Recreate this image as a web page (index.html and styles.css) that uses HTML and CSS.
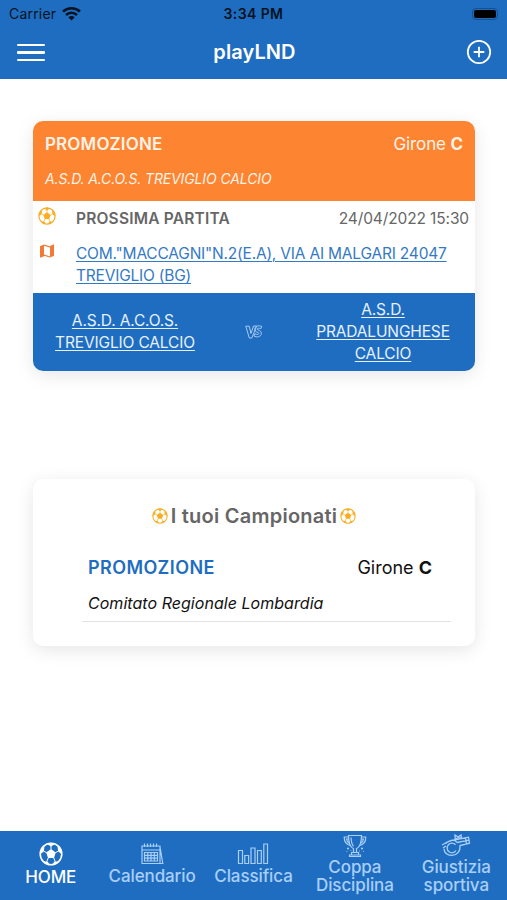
FILE: index.html
```html
<!DOCTYPE html>
<html lang="it">
<head>
    <meta charset="UTF-8">
    <meta name="viewport" content="width=device-width, initial-scale=1.0">
    <title>playLND</title>
    <link rel="stylesheet" href="styles.css">
</head>
<body>
    <svg class="sprite" aria-hidden="true">
        <symbol id="ball" viewBox="0 0 24 24">
            <circle cx="12" cy="12" r="10.8" fill="none" stroke="currentColor" stroke-width="1.6"/>
            <path fill="currentColor" d="M12 7l4.800 3.500-1.800 5.600H9L7.200 10.500zM7.500 1.800L12 4.500l4.500-2.700-4.500-1zM1.200 12.500l3.700-3.200.6-5.300-3.300 3.500zM22.800 12.500l-3.700-3.200-.6-5.300 3.300 3.500zM3.900 19.200l5 .5 1.400 3.100-3.300-.8zM20.100 19.200l-5 .5-1.400 3.100 3.300-.8z"/>
            <path fill="none" stroke="currentColor" stroke-width="1" d="M12 7.400V4M7.600 10.600l-3-1.400M16.400 10.600l3-1.400M9.300 15.800l-1.600 4M14.700 15.800l1.600 4"/>
        </symbol>
    </svg>

    <header class="header">
        <div class="status-bar">
            <div class="carrier">
                <span>Carrier</span>
                <svg width="19" height="14" viewBox="0 0 19 14" fill="none" stroke="#061321" stroke-width="2.500">
                    <path d="M1 4.700C5.700.2 13.300.2 18 4.700M4 8c3.100-2.900 7.900-2.900 11 0"/>
                    <path d="M6.300 10.200c1.800-1.600 4.600-1.600 6.400 0L9.500 13.600z" fill="#061321" stroke="none"/>
                </svg>
            </div>
            <div class="time">3:34 PM</div>
            <div class="battery"></div>
        </div>
        <div class="title-bar">
            <button class="menu-btn" aria-label="Menu"><i></i><i></i><i></i></button>
            <h1>playLND</h1>
            <button class="add-btn" aria-label="Aggiungi">
                <svg width="26" height="26" viewBox="0 0 26 26" fill="none" stroke="#fff" stroke-width="1.800">
                    <circle cx="13" cy="13" r="11.200"/>
                    <path d="M13 7.700v10.600M7.700 13h10.600"/>
                </svg>
            </button>
        </div>
    </header>

    <main class="content">
        <section class="card match">
            <div class="match-head">
                <div class="row">
                    <strong class="league">PROMOZIONE</strong>
                    <span class="group">Girone <b>C</b></span>
                </div>
                <em class="team">A.S.D. A.C.O.S. TREVIGLIO CALCIO</em>
            </div>
            <div class="match-info">
                <svg class="ball info-ball"><use href="#ball"/></svg>
                <div class="row">
                    <strong class="next">PROSSIMA PARTITA</strong>
                    <span class="date">24/04/2022 15:30</span>
                </div>
                <svg class="map" width="14" height="14" viewBox="0 0 14 14">
                    <path fill="#f37a35" d="M0 2.300L4 .6v11.600L0 13.800zM10 1.900L14 .2v11.600l-4 1.700z"/>
                    <path fill="none" stroke="#f37a35" stroke-width="1.300" d="M4 1.200l6 1.800M4 11.200l6 1.800"/>
                </svg>
                <a class="address" href="#">COM."MACCAGNI"N.2(E.A), VIA AI MALGARI 24047 TREVIGLIO (BG)</a>
            </div>
            <div class="versus">
                <a href="#">A.S.D. A.C.O.S.<br>TREVIGLIO CALCIO</a>
                <svg width="18" height="16" viewBox="0 0 18 16" fill="none" stroke="#a9cbf2" stroke-width="1" stroke-linejoin="round">
                    <path d="M.8 2.200h3.400L6 9.500 8.500 2h3.200L6.800 14H4.300z"/>
                    <path d="M16.800 2.500l-1 2.200c-2-.9-3.800-.5-3.600.6.2 1 4.300 1 4.200 4.200-.2 3.500-4.800 4.200-7.500 2.400l1-2.200c2 1.200 4 .9 4-.3 0-1.300-4.300-1-4.200-4 .1-3.500 4.200-4.400 7.100-2.900z"/>
                </svg>
                <a href="#">A.S.D.<br>PRADALUNGHESE<br>CALCIO</a>
            </div>
        </section>

        <section class="card leagues">
            <h2>
                <svg class="ball"><use href="#ball"/></svg>
                <span>I tuoi Campionati</span>
                <svg class="ball"><use href="#ball"/></svg>
            </h2>
            <div class="league-item">
                <div class="row">
                    <strong class="name">PROMOZIONE</strong>
                    <span class="group">Girone <b>C</b></span>
                </div>
                <em class="committee">Comitato Regionale Lombardia</em>
            </div>
        </section>
    </main>

    <nav class="tabs">
        <a class="tab active" href="#">
            <svg width="24" height="24"><use href="#ball"/></svg>
            <span>HOME</span>
        </a>
        <a class="tab" href="#">
            <svg width="24" height="24" viewBox="0 0 24 24" fill="none" stroke="currentColor" stroke-width="1.200">
                <path d="M2 4h18v17.500H2zM2 8h18M20 5l2.800 16.500H20M4.500 1.500V5M7.500 1.500V5M10.500 1.500V5M13.500 1.500V5M16.500 1.500V5"/>
                <path d="M4.500 10.500h13v8.500h-13zM4.500 13.300h13M4.500 16.200h13M7.800 10.500V19M11 10.500V19M14.300 10.500V19"/>
            </svg>
            <span>Calendario</span>
        </a>
        <a class="tab" href="#">
            <svg width="32" height="24" viewBox="0 0 32 24" fill="none" stroke="currentColor" stroke-width="1.200">
                <path d="M1.500 8.500h4v13h-4zM7.800 13.500h3.800v8H7.800zM14 6h4v15.500h-4zM20.500 8.500h3.800v13h-3.800zM26.800 2h3.700v19.500h-3.700z"/>
            </svg>
            <span>Classifica</span>
        </a>
        <a class="tab tall" href="#">
            <svg width="24" height="24" viewBox="0 0 24 24" fill="none" stroke="currentColor" stroke-width="1.200">
                <path d="M5.500 1.500h13c0 7-1.500 11.500-5 13.200v3.800h-3v-3.800C7 13 5.500 8.500 5.500 1.500zM8 3.500c.2 4.500 1 7 2.500 8.800"/>
                <path d="M5.500 3H1.200c0 5 2.300 7.800 6.300 8.500M5.800 5H3.500c.3 2.300 1.300 3.700 3 4.500M18.500 3h4.300c0 5-2.300 7.800-6.300 8.500M18.200 5h2.300c-.3 2.300-1.300 3.700-3 4.500M8.500 18.500h7V21h-7zM6.500 21h11v1.500h-11z"/>
                <path d="M5 13.500v2M4 14.500h2M19 13.500v2M18 14.500h2M7.500 16.500h.8M16 17h.8M3.500 17.500h.8M20 17.500h.8"/>
            </svg>
            <span>Coppa<br>Disciplina</span>
        </a>
        <a class="tab tall" href="#">
            <svg width="30" height="24" viewBox="0 0 30 24" fill="none" stroke="currentColor" stroke-width="1.300">
                <path d="M4.500 9.500C7 7 10 6.500 13 6l14.500-2.800 1 6-9.500 2.300c.5 5.500-2.500 9.500-8 9.800-5 .2-8-3-8-6.500M24.500 4l1 6M13 6l3.500 2.500 11-2.300"/>
                <path d="M14.500 10.800A4.800 4.800 0 1 0 15 16.500M1 11l4.500-2.500M2 14l3-2"/>
                <path d="M14 1l3 2 3-2 .5 3.500-3.300-.8-3 1.500z"/>
            </svg>
            <span>Giustizia<br>sportiva</span>
        </a>
    </nav>
</body>
</html>
```
FILE: styles.css
```css
* {
    box-sizing: border-box;
    margin: 0;
    padding: 0;
}

body {
    display: flex;
    flex-direction: column;
    height: 900px;
    background-color: #fff;
    color: #111;
    font-family: Inter, 'Liberation Sans', sans-serif;
    overflow: hidden;
}

svg {
    display: block;
    flex-shrink: 0;
}

button {
    background: none;
    border: none;
}

.sprite {
    display: none;
}

.row {
    display: flex;
    justify-content: space-between;
    align-items: baseline;
}

/* Header */
.header {
    height: 79px;
    background-color: #1f6dc1;
}

.status-bar {
    display: grid;
    grid-template-columns: 1fr auto 1fr;
    align-items: center;
    height: 27px;
    padding: 0 9px;
    color: #061321;
    font-size: 14px;
}

.carrier {
    display: flex;
    align-items: center;
    gap: 6px;
    letter-spacing: 0.2px;
}

.time {
    font-weight: 600;
    letter-spacing: 0.4px;
}

.battery {
    justify-self: end;
    width: 26px;
    height: 12px;
    border: 1px solid #16508f;
    border-radius: 4px;
    background: #000 content-box;
    padding: 1px;
}

.title-bar {
    display: grid;
    grid-template-columns: 1fr auto 1fr;
    align-items: center;
    height: 50px;
    padding: 0 15px 0 17px;
}

.title-bar h1 {
    color: #fff;
    font-size: 20px;
    font-weight: 600;
    letter-spacing: 0.1px;
}

.menu-btn {
    display: flex;
    flex-direction: column;
    gap: 5px;
    width: 28px;
    margin-top: 1px;
}

.menu-btn i {
    height: 2.3px;
    border-radius: 1px;
    background-color: #fff;
}

.add-btn {
    justify-self: end;
}

/* Cards */
.content {
    flex: 1;
    padding: 42px 32px 0 33px;
}

.card {
    border-radius: 10px;
    background-color: #fff;
    box-shadow: 0 4px 18px rgba(0, 0, 0, 0.1);
    overflow: hidden;
}

.match {
    height: 250px;
    margin-bottom: 108px;
}

.match-head {
    height: 80px;
    padding: 12px 12px 0;
    background-color: #fd8431;
    color: #fff3e8;
}

.match-head .row {
    line-height: 22px;
    font-size: 17px;
}

.match-head .league {
    font-weight: 600;
    letter-spacing: 0.15px;
}

.match-head .group {
    letter-spacing: -0.12px;
}

.team {
    display: block;
    margin-top: 14px;
    font-size: 14px;
    line-height: 20px;
    letter-spacing: -0.12px;
}

.ball {
    width: 16px;
    height: 16px;
    color: #f9ad20;
}

.match-info {
    display: grid;
    grid-template-columns: 37px 1fr;
    grid-template-rows: 34px 58px;
    height: 92px;
    padding: 0 6px;
}

.info-ball {
    width: 18px;
    height: 18px;
    margin-top: 6px;
    margin-left: -1px;
}

.match-info .row {
    padding-top: 7px;
    color: #666;
    font-size: 15.5px;
    line-height: 22px;
}

.next {
    font-weight: 600;
    letter-spacing: 0.2px;
}

.date {
    letter-spacing: -0.12px;
}

.map {
    margin: 9px 0 0 1px;
}

.address {
    padding-top: 8px;
    color: #3479c6;
    font-size: 15.5px;
    line-height: 22px;
    letter-spacing: -0.2px;
}

.versus {
    display: grid;
    grid-template-columns: 184px 1fr 184px;
    align-items: center;
    justify-items: center;
    height: 78px;
    background-color: #1f6dc1;
    font-size: 15.5px;
    line-height: 22px;
    letter-spacing: -0.15px;
    text-align: center;
}

.versus a {
    color: #e6f1fd;
}

.address,
.versus a {
    text-decoration-thickness: 1px;
    text-underline-offset: 2px;
}

.leagues {
    height: 167px;
    padding: 24px 24px 0 49px;
}

.leagues h2 {
    display: flex;
    align-items: center;
    justify-content: center;
    gap: 3px;
    margin-left: -25px;
    height: 26px;
    color: #666;
    font-size: 20px;
    font-weight: 600;
    letter-spacing: 0.25px;
}

.league-item {
    height: 93px;
    padding: 27px 19px 0 6px;
    border-bottom: 1px solid #e3e3e3;
}

.league-item .row {
    font-size: 18px;
    line-height: 24px;
}

.name {
    color: #1f6dc1;
    font-weight: 600;
    letter-spacing: 0.4px;
}

.committee {
    display: block;
    margin-top: 13px;
    font-size: 16px;
    line-height: 20px;
    letter-spacing: 0.04px;
}

/* Bottom tabs */
.tabs {
    display: grid;
    grid-template-columns: repeat(5, 1fr);
    height: 69px;
    background-color: #1f6dc1;
}

.tab {
    display: flex;
    flex-direction: column;
    align-items: center;
    padding-top: 11px;
    color: #a9cff8;
    font-size: 17px;
    font-weight: 500;
    line-height: 18px;
    letter-spacing: -0.1px;
    text-align: center;
    text-decoration: none;
}

.tab span {
    margin-top: 1px;
}

.tab.tall {
    padding-top: 3px;
}

.tab.tall span {
    margin-top: 0;
}

.tab.active {
    color: #fff;
}

.tab.active span {
    margin-top: 2px;
}
```
